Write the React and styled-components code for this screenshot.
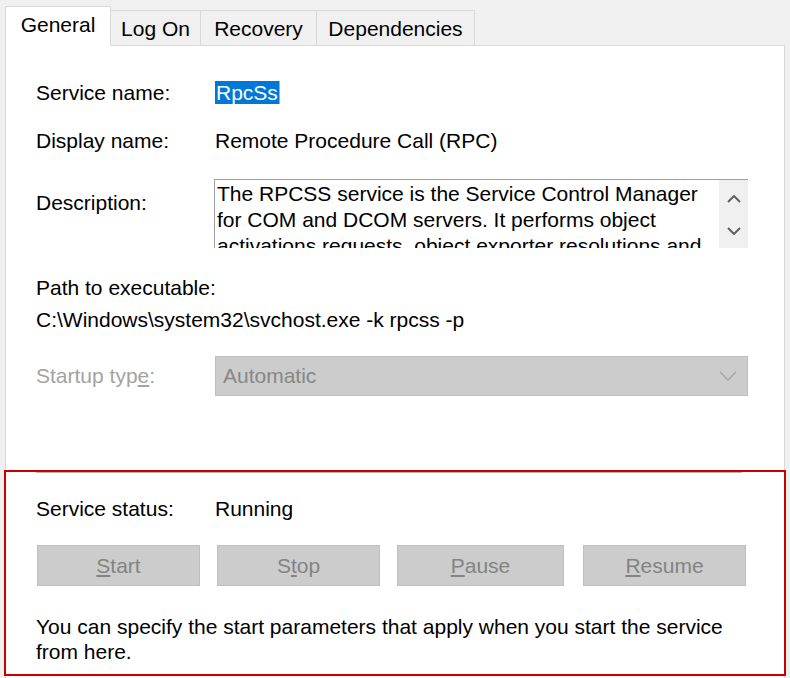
import React from 'react';
import styled, { createGlobalStyle } from 'styled-components';

const GlobalStyle = createGlobalStyle`
  html, body {
    margin: 0;
    padding: 0;
    background: #f0f0f0;
  }
  body {
    font-family: "Liberation Sans", Arial, sans-serif;
    font-size: 21px;
    color: #000;
  }
`;

const Page = styled.div`
  width: 790px;
  height: 678px;
  overflow: hidden;
  background: #f0f0f0;
`;

const TabStrip = styled.div`
  display: flex;
  align-items: flex-end;
  height: 45px;
  padding-left: 5px;
  box-sizing: border-box;
  position: relative;
  z-index: 1;
`;

const Tab = styled.div`
  box-sizing: border-box;
  width: ${(p) => p.$w}px;
  height: ${(p) => (p.$active ? 40 : 35)}px;
  margin-bottom: ${(p) => (p.$active ? -1 : 0)}px;
  margin-left: ${(p) => (p.$first ? 0 : -1)}px;
  border: 1px solid #d9d9d9;
  border-bottom: none;
  background: ${(p) => (p.$active ? '#fff' : '#f0f0f0')};
  text-align: center;
  line-height: ${(p) => (p.$active ? 36 : 35)}px;
  white-space: nowrap;
`;

const Panel = styled.div`
  margin-left: 5px;
  width: 780px;
  min-height: 660px;
  box-sizing: border-box;
  border: 1px solid #d9d9d9;
  background: #fff;
`;

const Main = styled.div`
  padding: 35px 36px 0 30px;
`;

const Row = styled.div`
  display: grid;
  grid-template-columns: 179px 1fr;
  align-items: ${(p) => p.$align || 'center'};
  margin-top: ${(p) => p.$mt || 0}px;
  line-height: 24px;
`;

const Label = styled.div`
  color: ${(p) => (p.$disabled ? '#a3a3a3' : '#000')};
  padding-top: ${(p) => p.$pt || 0}px;
  white-space: nowrap;
`;

const Value = styled.div`
  white-space: nowrap;
`;

const Selected = styled.span`
  background: #0078d7;
  color: #fff;
  padding: 0 1px;
  border-right: 1px solid #f0a040;
`;

const DescBox = styled.div`
  display: flex;
  height: 69px;
  margin-left: -1px;
  box-sizing: border-box;
  border-top: 1px solid #a0a0a0;
  border-left: 1px solid #a0a0a0;
  overflow: hidden;
`;

const DescText = styled.div`
  flex: 1;
  padding: 1px 0 0 2px;
  line-height: 26px;
  white-space: nowrap;
  overflow: hidden;
`;

const ScrollBar = styled.div`
  width: 29px;
  background: #f0f0f0;
  display: flex;
  flex-direction: column;
  align-items: center;
  gap: 24px;
  padding-top: 15px;
  box-sizing: border-box;
`;

const Block = styled.div`
  margin-top: ${(p) => p.$mt || 0}px;
  line-height: 24px;
  white-space: nowrap;
`;

const Combo = styled.div`
  display: flex;
  align-items: center;
  justify-content: space-between;
  height: 40px;
  box-sizing: border-box;
  border: 1px solid #bfbfbf;
  background: #cccccc;
  color: #878787;
  padding: 0 10px 0 7px;
`;

const Mnemonic = styled.span`
  text-decoration: underline;
  text-underline-offset: 2px;
`;

const StatusSection = styled.div`
  margin: 74px -2px 0;
  border: 2px solid #c80000;
  padding: 0 36px 10px 30px;
`;

const Separator = styled.div`
  height: 1px;
  margin-right: 6px;
  background: #b4b4b4;
`;

const ButtonRow = styled.div`
  display: grid;
  grid-template-columns: 163px 163px 167px 165px;
  column-gap: 17px;
  margin: 24px 0 0 1px;
`;

const Button = styled.button`
  height: 41px;
  border: 1px solid #bfbfbf;
  background: #cccccc;
  color: #838383;
  font-family: inherit;
  font-size: 21px;
  padding: 0;
  margin-left: ${(p) => p.$shift || 0}px;
`;

const Hint = styled.div`
  margin-top: 28px;
  line-height: 25px;
`;

const Chevron = ({ up, color = '#606060', w = 14, h = 8, sw = 2 }) => (
  <svg width={w} height={h} viewBox={`0 0 ${w} ${h}`}>
    <polyline
      points={up ? `1,${h - 1} ${w / 2},1 ${w - 1},${h - 1}` : `1,1 ${w / 2},${h - 1} ${w - 1},1`}
      fill="none"
      stroke={color}
      strokeWidth={sw}
    />
  </svg>
);

const tabs = [
  { label: 'General', w: 106, active: true },
  { label: 'Log On', w: 91 },
  { label: 'Recovery', w: 117 },
  { label: 'Dependencies', w: 159 },
];

const descLines = [
  'The RPCSS service is the Service Control Manager',
  'for COM and DCOM servers. It performs object',
  'activations requests, object exporter resolutions and',
  'distributed garbage collection for COM and DCOM servers.',
];

const buttons = [
  ['', 'S', 'tart', 0],
  ['S', 't', 'op', 0],
  ['', 'P', 'ause', 0],
  ['', 'R', 'esume', 2],
];

export default function App() {
  return (
    <Page>
      <GlobalStyle />
      <TabStrip>
        {tabs.map((t, i) => (
          <Tab key={t.label} $w={t.w} $active={t.active} $first={i === 0}>
            {t.label}
          </Tab>
        ))}
      </TabStrip>
      <Panel>
        <Main>
          <Row>
            <Label>Service name:</Label>
            <Value>
              <Selected>RpcSs</Selected>
            </Value>
          </Row>
          <Row $mt={24}>
            <Label>Display name:</Label>
            <Value>Remote Procedure Call (RPC)</Value>
          </Row>
          <Row $mt={26} $align="start">
            <Label $pt={12}>Description:</Label>
            <DescBox>
              <DescText>
                {descLines.map((l) => (
                  <div key={l}>{l}</div>
                ))}
              </DescText>
              <ScrollBar>
                <Chevron up />
                <Chevron />
              </ScrollBar>
            </DescBox>
          </Row>
          <Block $mt={28}>Path to executable:</Block>
          <Block $mt={8}>C:\Windows\system32\svchost.exe -k rpcss -p</Block>
          <Row $mt={24}>
            <Label $disabled>
              Startup typ<Mnemonic>e</Mnemonic>:
            </Label>
            <Combo>
              <span>Automatic</span>
              <Chevron color="#a8a8a8" w={18} h={10} sw={1.5} />
            </Combo>
          </Row>
        </Main>
        <StatusSection>
          <Separator />
          <Row $mt={24}>
            <Label>Service status:</Label>
            <Value>Running</Value>
          </Row>
          <ButtonRow>
            {buttons.map(([a, m, b, shift]) => (
              <Button key={a + m + b} $shift={shift} disabled>
                {a}
                <Mnemonic>{m}</Mnemonic>
                {b}
              </Button>
            ))}
          </ButtonRow>
          <Hint>
            You can specify the start parameters that apply when you start the service
            <br />
            from here.
          </Hint>
        </StatusSection>
      </Panel>
    </Page>
  );
}
